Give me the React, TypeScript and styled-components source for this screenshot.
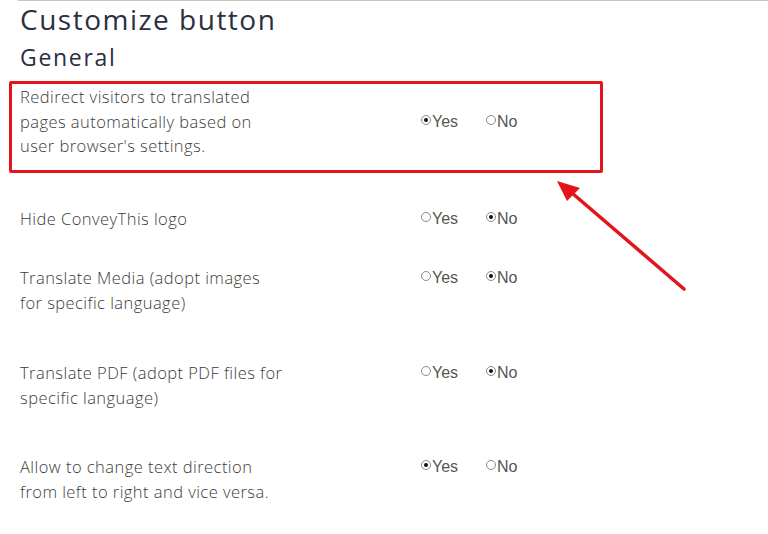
import React from 'react';
import styled, { createGlobalStyle } from 'styled-components';

const Global = createGlobalStyle`
  html, body { margin: 0; padding: 0; background: #fff; }
  body { font-family: "Open Sans", "Liberation Sans", sans-serif; }
`;

const Page = styled.div`
  position: relative;
  width: 768px;
  height: 534px;
  overflow: hidden;
  background: #fff;
`;

const TopRule = styled.div`
  margin-left: 18px;
  height: 1px;
  background: #c4c4c4;
`;

const Content = styled.div`
  padding: 0 0 0 20px;
`;

const Title = styled.h1`
  margin: 0;
  font-family: "Open Sans", sans-serif;
  font-weight: 500;
  font-size: 28px;
  line-height: 36px;
  color: #2b2f3f;
  letter-spacing: 1.5px;
`;

const Subtitle = styled.h2`
  margin: 2px 0 0;
  font-family: "Open Sans", sans-serif;
  font-weight: 500;
  font-size: 23px;
  line-height: 36px;
  color: #2b2f3f;
  letter-spacing: 1.7px;
`;

const Rows = styled.div`
  margin-top: 6px;
  display: flex;
  flex-direction: column;
`;

const Row = styled.div<{ $highlight?: boolean; $space: number }>`
  display: grid;
  grid-template-columns: 401px 65px 1fr;
  align-items: ${({ $highlight }) => ($highlight ? 'center' : 'start')};
  margin-bottom: ${({ $space }) => $space}px;
  ${({ $highlight }) =>
    $highlight
      ? `
    margin-left: -11px;
    width: 580px;
    padding: 1px 0 11px 8px;
    border: 3px solid #e3141b;
    border-radius: 2px;
  `
      : ''}
`;

const Label = styled.div`
  max-width: 264px;
  font-family: "Open Sans", sans-serif;
  font-weight: 300;
  font-size: 16.5px;
  line-height: 24.5px;
  letter-spacing: 0.45px;
  color: #3b3b3b;
`;

const Option = styled.label`
  display: flex;
  align-items: center;
  height: 24px;
  font-family: "Liberation Sans", Arial, sans-serif;
  font-size: 16px;
  color: #555;
`;

const Dot = styled.span<{ $on: boolean }>`
  position: relative;
  flex-shrink: 0;
  width: 10px;
  height: 10px;
  margin-top: -4px;
  margin-right: 1px;
  border: 1px solid #8a8a8a;
  border-radius: 50%;
  box-sizing: border-box;
  background: #fff;
  &::after {
    content: '';
    display: ${({ $on }) => ($on ? 'block' : 'none')};
    position: absolute;
    left: 2px;
    top: 2px;
    width: 4px;
    height: 4px;
    border-radius: 50%;
    background: #111;
  }
`;

const Arrow = styled.svg`
  position: absolute;
  left: 0;
  top: 0;
  pointer-events: none;
`;

type Setting = { label: string; yes: boolean; space: number; highlight?: boolean };

const settings: Setting[] = [
  { label: "Redirect visitors to translated pages automatically based on user browser's settings.", yes: true, space: 34, highlight: true },
  { label: 'Hide ConveyThis logo', yes: false, space: 35 },
  { label: 'Translate Media (adopt images for specific language)', yes: false, space: 46 },
  { label: 'Translate PDF (adopt PDF files for specific language)', yes: false, space: 45 },
  { label: 'Allow to change text direction from left to right and vice versa.', yes: true, space: 0 },
];

export default function App() {
  return (
    <Page>
      <Global />
      <TopRule />
      <Content>
        <Title>Customize button</Title>
        <Subtitle>General</Subtitle>
        <Rows>
          {settings.map(s => (
            <Row key={s.label} $highlight={s.highlight} $space={s.space}>
              <Label>{s.label}</Label>
              <Option><Dot $on={s.yes} />Yes</Option>
              <Option><Dot $on={!s.yes} />No</Option>
            </Row>
          ))}
        </Rows>
      </Content>
      <Arrow width="768" height="534" viewBox="0 0 768 534">
        <line x1="684" y1="289" x2="572" y2="193" stroke="#e3141b" strokeWidth="3.5" strokeLinecap="round" />
        <polygon points="557,181 580,188 567,201" fill="#e3141b" />
      </Arrow>
    </Page>
  );
}
